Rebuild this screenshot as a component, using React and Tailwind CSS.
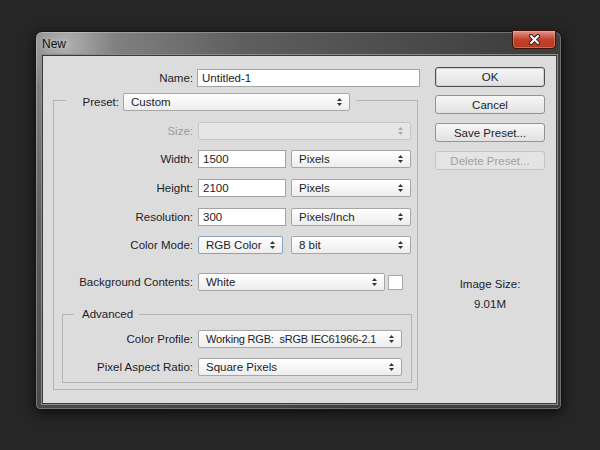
import React from 'react';

function Arrows({ disabled }) {
  const c = disabled ? '#a8a8a8' : '#333333';
  return (
    <svg width="5" height="8" viewBox="0 0 5 8" className="shrink-0">
      <polygon points="0,3 2.5,0 5,3" fill={c} />
      <polygon points="0,5 2.5,8 5,5" fill={c} />
    </svg>
  );
}

function Select({ className = '', textClass = '', children, disabled, focus }) {
  const border = disabled
    ? 'border-[#c6c6c6] bg-[#e6e6e6]'
    : focus
      ? 'border-[#86a2c4] bg-linear-to-b from-white to-[#ededed]'
      : 'border-[#a6a6a6] bg-linear-to-b from-white to-[#ededed]';
  return (
    <div className={`h-[18px] flex items-center justify-between border rounded-[2px] pl-[7px] pr-[7px] ${border} ${className}`}>
      <span className={`whitespace-pre leading-[14px] ${textClass}`}>{children}</span>
      <Arrows disabled={disabled} />
    </div>
  );
}

function Field({ className = '', children }) {
  return (
    <div className={`h-[18px] flex items-center bg-white border border-[#a3a3a3] pl-[4px] ${className}`}>
      <span className="leading-[14px]">{children}</span>
    </div>
  );
}

function Row({ label, labelW, className = '', muted, children }) {
  return (
    <div className={`h-[18px] flex items-center ${className}`}>
      <span className={`${labelW} text-right leading-[14px] ${muted ? 'text-[#9c9c9c]' : ''}`}>{label}</span>
      {children}
    </div>
  );
}

function Button({ children, kind, className = '' }) {
  const look =
    kind === 'default'
      ? 'h-[20px] border-[#4e4e4e] bg-linear-to-b from-[#f7f7f7] to-[#e0e0e0] shadow-[inset_0_0_0_1px_#d0d0d0]'
      : kind === 'disabled'
        ? 'h-[19px] border-[#c4c4c4] bg-[#e4e4e4] text-[#a2a2a2]'
        : 'h-[19px] border-[#939393] bg-linear-to-b from-[#f7f7f7] to-[#e2e2e2]';
  return (
    <div className={`w-[110px] flex items-center justify-center border rounded-[3px] leading-[14px] ${look} ${className}`}>
      {children}
    </div>
  );
}

export default function App() {
  return (
    <div className="w-[600px] h-[450px] bg-[#262626] pt-[31px] pl-[35px] font-['Liberation_Sans',Arial,sans-serif] text-[11.5px] text-[#1c1c28]">
      {/* window frame */}
      <div className="w-[527px] h-[379px] flex flex-col rounded-t-[7px] rounded-b-[5px] border border-[#161616] bg-[radial-gradient(circle_at_30px_12px,#b0b0b0_0px,#808080_50px,#5e5e5e_180px,#3e3e3e_460px)] shadow-[0_3px_12px_rgba(0,0,0,0.7),inset_0_0_0_1px_rgba(255,255,255,0.25)]">
        {/* title bar */}
        <div className="h-[23px] flex items-start justify-between">
          <span className="pl-[6px] pt-[5px] text-[12px] leading-[14px] text-[#111] [text-shadow:0_0_6px_rgba(255,255,255,0.7)]">New</span>
          <div className="mt-[-2px] mr-[5px] w-[44px] h-[19px] flex items-center justify-center rounded-b-[4px] border border-[#3e1208] bg-linear-to-b from-[#dd968a] via-[#c3402a] to-[#b8391f] shadow-[inset_0_0_0_1px_rgba(255,200,180,0.35)]">
            <svg width="13" height="11" viewBox="0 0 13 11">
              <path d="M3 2 L10 9 M10 2 L3 9" stroke="#3a2020" strokeWidth="4" strokeLinecap="round" />
              <path d="M3 2 L10 9 M10 2 L3 9" stroke="#ffffff" strokeWidth="2" strokeLinecap="round" />
            </svg>
          </div>
        </div>

        {/* client area */}
        <div className="flex-1 pl-[6px] pr-[4px] pb-[5px] flex">
          <div className="flex-1 flex border border-[#3a3a3a] bg-[#dcdcdc] shadow-[0_0_0_1px_#8c8c8c]">
            {/* left column */}
            <div className="w-[377px] flex flex-col">
              <Row label="Name:" labelW="w-[150px]" className="mt-[13px]">
                <Field className="ml-[4px] w-[223px]">Untitled-1</Field>
              </Row>

              <fieldset className="mt-[2px] ml-[10px] w-[365px] border border-[#b4b4b4] pb-[6px]">
                <legend className="ml-[12px] pl-[12px] pr-[6px] pt-[4px] flex items-center">
                  <span className="w-[41px] text-right leading-[14px]">Preset:</span>
                  <Select className="ml-[4px] w-[227px]">Custom</Select>
                </legend>

                <Row label="Size:" labelW="w-[139px]" muted className="mt-[11px]">
                  <Select disabled className="ml-[5px] w-[213px]"></Select>
                </Row>
                <Row label="Width:" labelW="w-[139px]" className="mt-[10px]">
                  <Field className="ml-[5px] w-[88px]">1500</Field>
                  <Select className="ml-[5px] w-[120px]">Pixels</Select>
                </Row>
                <Row label="Height:" labelW="w-[139px]" className="mt-[11px]">
                  <Field className="ml-[5px] w-[88px]">2100</Field>
                  <Select className="ml-[5px] w-[120px]">Pixels</Select>
                </Row>
                <Row label="Resolution:" labelW="w-[139px]" className="mt-[11px]">
                  <Field className="ml-[5px] w-[88px]">300</Field>
                  <Select className="ml-[5px] w-[120px]">Pixels/Inch</Select>
                </Row>
                <Row label="Color Mode:" labelW="w-[139px]" className="mt-[10px]">
                  <Select focus className="ml-[5px] w-[85px]">RGB Color</Select>
                  <Select className="ml-[8px] w-[120px]">8 bit</Select>
                </Row>

                <Row label="Background Contents:" labelW="w-[139px]" className="mt-[19px]">
                  <Select className="ml-[5px] w-[187px]">White</Select>
                  <div className="ml-[3px] w-[15px] h-[15px] bg-white border border-[#a8a8a8]" />
                </Row>

                <fieldset className="mt-[16px] ml-[8px] w-[350px] border border-[#b4b4b4] pb-[6px]">
                  <legend className="ml-[11px] pl-[8px] pr-[6px] leading-[14px]">Advanced</legend>
                  <Row label="Color Profile:" labelW="w-[130px]" className="mt-[9px]">
                    <Select className="ml-[5px] w-[204px]" textClass="text-[11px] tracking-[-0.2px]">{'Working RGB:  sRGB IEC61966-2.1'}</Select>
                  </Row>
                  <Row label="Pixel Aspect Ratio:" labelW="w-[130px]" className="mt-[10px]">
                    <Select className="ml-[5px] w-[204px]">Square Pixels</Select>
                  </Row>
                </fieldset>
              </fieldset>
            </div>

            {/* right column */}
            <div className="ml-[15px] w-[110px] flex flex-col">
              <Button kind="default" className="mt-[11px]">OK</Button>
              <Button className="mt-[8px]">Cancel</Button>
              <Button className="mt-[9px]">Save Preset...</Button>
              <Button kind="disabled" className="mt-[9px]">Delete Preset...</Button>
              <div className="mt-[107px] text-center leading-[14px]">Image Size:</div>
              <div className="mt-[6px] text-center leading-[14px]">9.01M</div>
            </div>
          </div>
        </div>
      </div>
    </div>
  );
}
